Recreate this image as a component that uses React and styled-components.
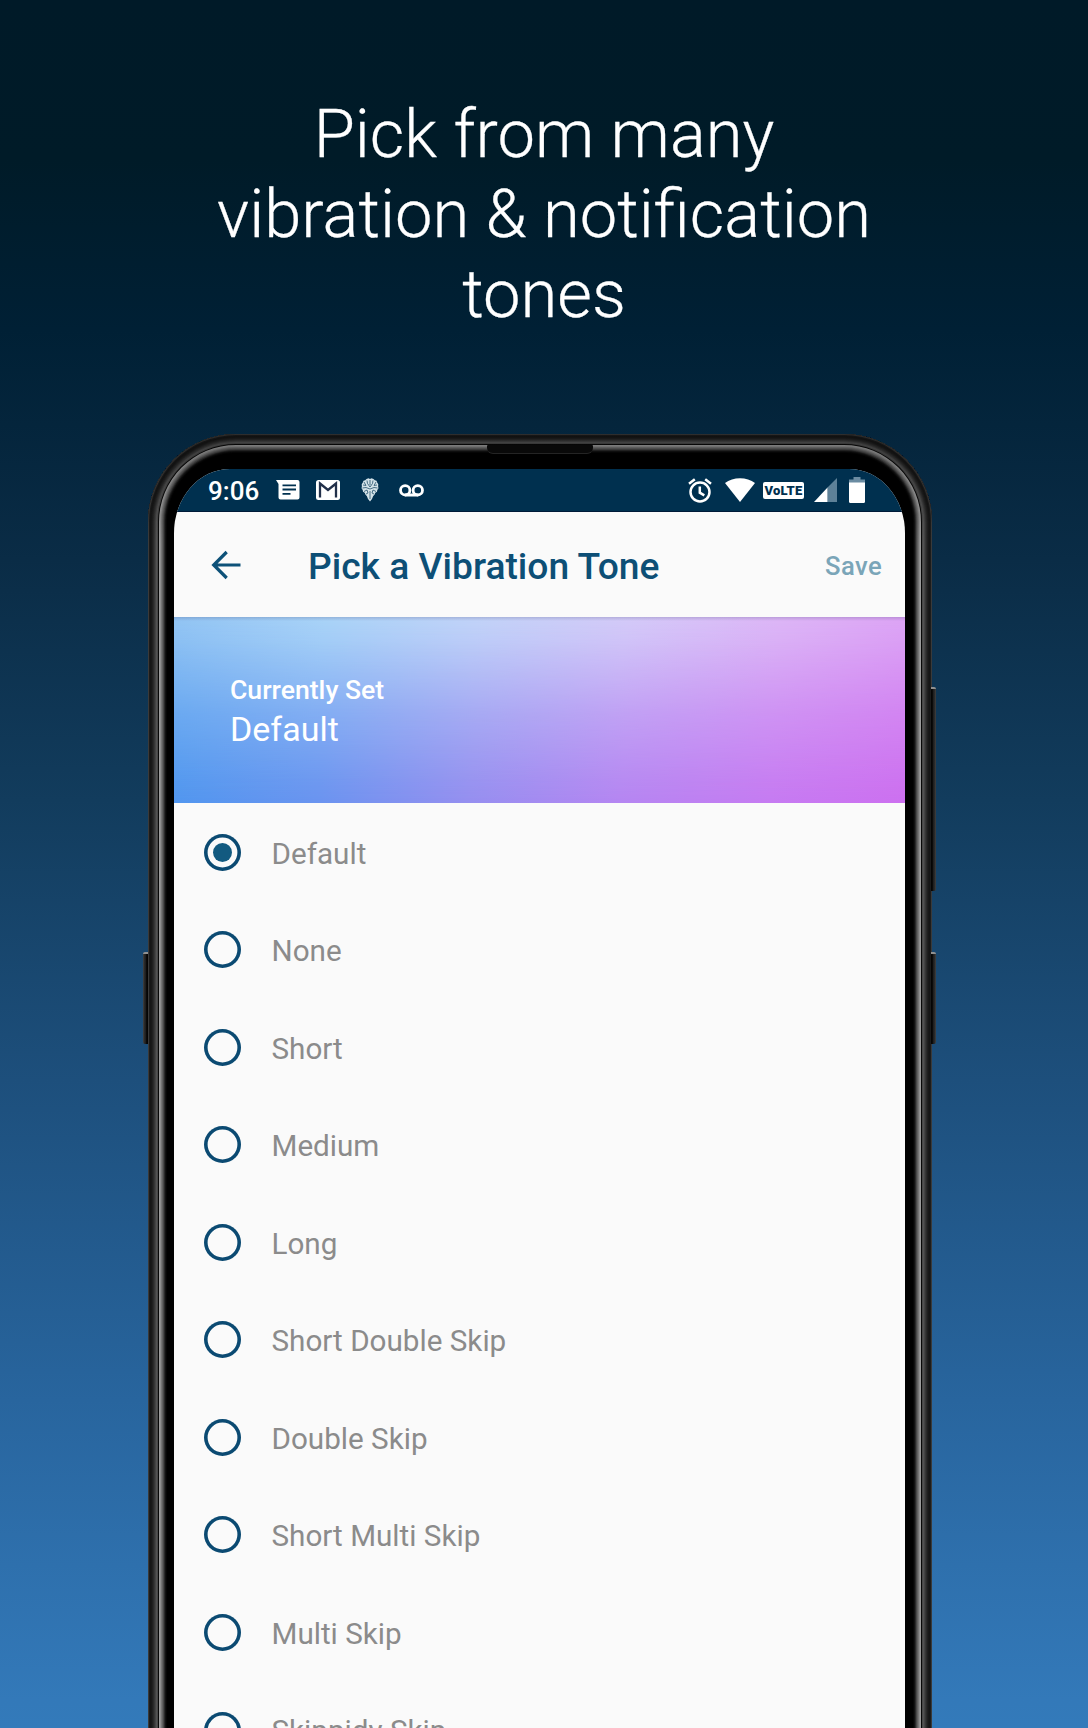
import React from "react";
import styled, { createGlobalStyle } from "styled-components";

const Global = createGlobalStyle`
  html, body { margin: 0; padding: 0; background: #001826; }
  * { box-sizing: border-box; }
`;

const rim = [
  "#3a3a3a", "#1c1c1c", "#161616", "#191919", "#202020", "#2a2a2a", "#363636",
  "#444444", "#525252", "#484848", "#080808", "#9c9c9c", "#8e8e8e", "#757575",
  "#606060", "#484848", "#2a2a2a", "#121212", "#060606",
];
const rimShadow = rim.map((c, i) => `inset 0 0 0 ${i + 1}px ${c}`).join(", ");

const Page = styled.main`
  width: 1088px;
  height: 1728px;
  overflow: hidden;
  display: flex;
  flex-direction: column;
  align-items: center;
  font-family: Roboto, "Liberation Sans", sans-serif;
  background: linear-gradient(180deg, #001a28 0, #001b28 160px, #002035 330px, #0a2c46 560px, #123c5d 800px, #1d4f7c 1080px, #28659e 1400px, #3379b9 1700px, #337aba 1728px);
`;

const Headline = styled.h1`
  flex: none;
  margin: 0;
  padding-top: 94px;
  height: 434px;
  color: #fff;
  font-weight: 300;
  font-size: 66.9px;
  line-height: 80.2px;
  text-align: center;
  -webkit-text-stroke: 0.3px #fff;
`;

const Phone = styled.div`
  position: relative;
  width: 784px;
  height: 1400px;
  flex: none;
  margin-right: 8px;
  padding: 35px 27px 0 26px;
  border-radius: 88px 88px 0 0;
  background: #000;
  box-shadow: ${rimShadow};

  &::before {
    content: "";
    position: absolute;
    inset: 0;
    border-radius: inherit;
    background: linear-gradient(180deg, rgba(0, 0, 0, 0.22) 20px, rgba(0, 0, 0, 0) 110px);
  }
`;

const Speaker = styled.div`
  position: absolute;
  top: 11px;
  left: 339px;
  width: 106px;
  height: 9px;
  border-radius: 1px 1px 6px 6px;
  background: #090909;
  border-bottom: 1px solid #242424;
`;

const SideKey = styled.div`
  position: absolute;
  ${(p) => (p.$side === "left" ? "left: -5px" : "right: -4px")};
  top: ${(p) => p.$top}px;
  width: 5px;
  height: ${(p) => p.$height}px;
  border-radius: ${(p) => (p.$side === "left" ? "2px 0 0 2px" : "0 2px 2px 0")};
  background: linear-gradient(${(p) => (p.$side === "left" ? "270deg" : "90deg")}, #050505 25%, #1d1d1d 45%, #2b2b2b 75%, #444);
  border-top: 2px solid #909090;
`;

const Screen = styled.div`
  position: relative;
  height: 1365px;
  overflow: hidden;
  border-radius: 56px 56px 0 0 / 64px 64px 0 0;
  background: #fafafa;
`;

const StatusBar = styled.div`
  display: flex;
  justify-content: space-between;
  align-items: center;
  height: 43px;
  padding: 0 40px 0 34px;
  background: #00304f;
  border-bottom: 1px solid #001a38;
  color: #fff;
`;

const StatusGroup = styled.div`
  display: flex;
  align-items: center;
`;

const Slot = styled.span`
  display: flex;
  margin-left: ${(p) => p.$gap}px;
`;

const Clock = styled.span`
  width: 51px;
  font-size: 26px;
  font-weight: 500;
  line-height: 32px;
  white-space: nowrap;
  padding-top: 2px;
`;

const Volte = styled.span`
  width: 41px;
  height: 17px;
  border-radius: 2px;
  background: #fff;
  color: #00304f;
  font-size: 13px;
  font-weight: 900;
  line-height: 17px;
  letter-spacing: 0.2px;
  text-align: center;
`;

const AppBar = styled.header`
  display: flex;
  align-items: center;
  height: 105px;
  padding: 3px 23px 0 37px;
  color: #0d4f76;
`;

const Title = styled.h2`
  flex: 1;
  margin: 0 0 0 67px;
  font-size: 37.2px;
  font-weight: 500;
  line-height: 44px;
`;

const Save = styled.button`
  border: 0;
  padding: 0;
  background: none;
  color: #7aa5b8;
  font: 500 25.6px/30px Roboto, sans-serif;
  letter-spacing: 0.4px;
`;

const Banner = styled.section`
  position: relative;
  height: 186px;
  padding: 56px 56px 0;
  color: #fff;
  background: linear-gradient(97deg, #4d97ef 0%, #6a94f0 22%, #958ff0 42%, #b586f2 62%, #c67bf2 82%, #cd70f0 100%);

  &::before {
    content: "";
    position: absolute;
    inset: 0;
    background:
      linear-gradient(180deg, rgba(60, 60, 110, 0.2) 0, rgba(60, 60, 110, 0) 4px),
      linear-gradient(98deg, #92c4f3 0%, #a9d3f7 20%, #c1d3f8 40%, #d3caf8 60%, #dcb6f6 80%, #dca0f4 100%);
    mask-image: linear-gradient(180deg, #000 0, rgba(0, 0, 0, 0.9) 12%, rgba(0, 0, 0, 0.4) 52%, rgba(0, 0, 0, 0.08) 88%, transparent 100%);
  }
`;

const BannerLabel = styled.div`
  position: relative;
  font-size: 26.6px;
  font-weight: 500;
  line-height: 33px;
`;

const BannerValue = styled.div`
  position: relative;
  font-size: 34px;
  line-height: 40px;
  margin-top: 3px;
`;

const List = styled.div`
  display: flex;
  flex-direction: column;
`;

const Row = styled.label`
  display: flex;
  align-items: center;
  flex: none;
  height: 97.54px;
  padding-left: 30px;
  color: #8b8b8b;
  font-size: 29.65px;
  line-height: 36px;
`;

const Radio = styled.span`
  display: grid;
  place-items: center;
  width: 37px;
  height: 37px;
  margin: 1px 30.5px 0 0;
  box-shadow: inset 0 0 0 3.6px #0b4a72;
  border-radius: 50%;

  &::after {
    content: "";
    width: 19px;
    height: 19px;
    border-radius: 50%;
    background: ${(p) => (p.$on ? "#125a80" : "transparent")};
  }
`;

const RowText = styled.span`
  padding-top: 3.5px;
`;

const MessageIcon = () => (
  <svg width="24" height="20" viewBox="0 0 24 20">
    <path fill="#fff" d="M0 0h21.500Q23.500 0 23.500 2v15.500q0 2-2 2h-17q-2 0-2-2V4z" />
    <path stroke="#00304f" strokeWidth="1.800" d="M6.500 5.300h13.500M6.500 9.500h13.500M6.500 13.800h8" />
  </svg>
);

const MailIcon = () => (
  <svg width="24" height="20" viewBox="0 0 24 20">
    <rect width="24" height="20" rx="2.500" fill="#fff" />
    <path fill="none" stroke="#22304a" strokeWidth="2.300" d="M4 17.500V3.500l8 6.500 8-6.500v14" />
  </svg>
);

const BrainIcon = () => (
  <svg width="18" height="24" viewBox="0 0 18 24" fill="none">
    <path fill="#d3e2e8" d="M5.500 1 7.500.3 9 1l1.500-.7 2 .7 1.300 1.300 1.700.5.800 2 1 1.500-.2 2 .4 2-1.200 1.700-.3 1.800-1.700 1-.8 2-1.300 1.200L11 21l-2 2.500L7 21l-1.200-3-1.300-1.200-.8-2-1.700-1-.3-1.800L.5 10.300l.4-2-.2-2 1-1.500.8-2 1.700-.5z" />
    <path stroke="#24506b" strokeWidth=".8" d="M9 2v5M9 13v8M6 2.500l.5 3L9 9l2.500-3.500.5-3M3 4l2 3.500L2 7M15 4l-2 3.500L16 7M1.500 10l3.500-.5L9 11l4-1.500 3.500.500M3 13.500l3-1.500 1 3-2 1M15 13.500l-3-1.500-1 3 2 1" />
  </svg>
);

const VoicemailIcon = () => (
  <svg width="25" height="13" viewBox="0 0 25 13" fill="none" stroke="#fff" strokeWidth="2.800">
    <circle cx="6.200" cy="6.300" r="4.700" />
    <circle cx="18.800" cy="6.300" r="4.700" />
    <path d="M6.200 11h12.600" />
  </svg>
);

const AlarmIcon = () => (
  <svg width="24" height="25" viewBox="0 0 24 25" fill="none" stroke="#fff" strokeWidth="2.500">
    <circle cx="12" cy="14" r="9.500" />
    <path d="M11.800 8.500v6.200l4.500 2.600M1 5.800 6.800 1.200M23 5.800 17.200 1.200" />
  </svg>
);

const WifiIcon = () => (
  <svg width="30" height="24" viewBox="0 0 30 24">
    <path fill="#fff" d="M0 5C8-1.300 22-1.300 30 5L15 24z" />
  </svg>
);

const SignalIcon = () => (
  <svg width="23" height="24" viewBox="0 0 23 24">
    <path fill="#5e8198" d="M13.500 9.500 23 0v24h-9.500z" />
    <path fill="#fff" d="M13.500 9.500V24H0z" />
  </svg>
);

const BatteryIcon = () => (
  <svg width="16" height="26" viewBox="0 0 16 26">
    <path fill="#6b8ca2" d="M4.500 0h7v2.500H16V6H0V2.500h4.500z" />
    <path fill="#fff" d="M0 5.500h16v19q0 1.500-1.500 1.500h-13Q0 26 0 24.500z" />
  </svg>
);

const BackIcon = () => (
  <svg width="30" height="32" viewBox="0 0 30 32" fill="none" stroke="#0d5178" strokeWidth="3.200">
    <path d="M29.500 15H3M15.700 2l-13 13 13 13" />
  </svg>
);

const tones = [
  "Default", "None", "Short", "Medium", "Long", "Short Double Skip",
  "Double Skip", "Short Multi Skip", "Multi Skip", "Skippidy Skip",
];

export default function App() {
  return (
    <Page>
      <Global />
      <Headline>
        Pick from many<br />vibration &amp; notification<br />tones
      </Headline>
      <Phone>
        <Speaker />
        <SideKey $side="left" $top={518} $height={92} />
        <SideKey $side="right" $top={253} $height={204} />
        <SideKey $side="right" $top={518} $height={92} />
        <Screen>
          <StatusBar>
            <StatusGroup>
              <Clock>9:06</Clock>
              <Slot $gap={17}><MessageIcon /></Slot>
              <Slot $gap={16}><MailIcon /></Slot>
              <Slot $gap={21}><BrainIcon /></Slot>
              <Slot $gap={20}><VoicemailIcon /></Slot>
            </StatusGroup>
            <StatusGroup>
              <AlarmIcon />
              <Slot $gap={13}><WifiIcon /></Slot>
              <Slot $gap={8}><Volte>VoLTE</Volte></Slot>
              <Slot $gap={10}><SignalIcon /></Slot>
              <Slot $gap={12}><BatteryIcon /></Slot>
            </StatusGroup>
          </StatusBar>
          <AppBar>
            <BackIcon />
            <Title>Pick a Vibration Tone</Title>
            <Save>Save</Save>
          </AppBar>
          <Banner>
            <BannerLabel>Currently Set</BannerLabel>
            <BannerValue>Default</BannerValue>
          </Banner>
          <List>
            {tones.map((tone, i) => (
              <Row key={tone}>
                <Radio $on={i === 0} />
                <RowText>{tone}</RowText>
              </Row>
            ))}
          </List>
        </Screen>
      </Phone>
    </Page>
  );
}
